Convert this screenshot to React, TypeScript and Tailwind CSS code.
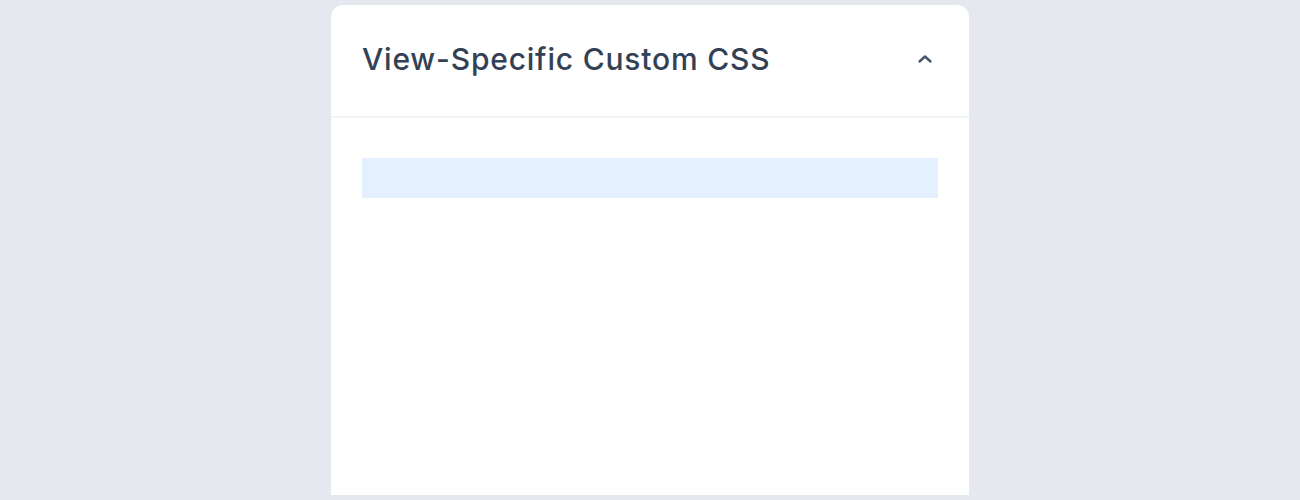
export default function App() {
  return (
    <div
      className="w-screen h-[500px] bg-[#e5e9ef] flex justify-center pt-[5px]"
      style={{ fontFamily: 'Inter, "Noto Sans", sans-serif' }}
    >
      <div className="w-[638px] h-[490px] bg-white rounded-t-xl flex flex-col">
        {/* Header */}
        <div className="h-[113px] flex items-center justify-between pl-[31px] pr-[35px] border-b-2 border-[#f3f4f6]">
          <h2 className="text-[30px] font-medium text-[#334155] tracking-[0.8px] leading-none -mt-[3px]">
            View-Specific Custom CSS
          </h2>
          <svg className="w-[18px] h-[18px] text-[#475569] -mt-[3px]" viewBox="0 0 18 18" fill="none">
            <path d="M3.5 11.5L9 6.5l5.5 5" stroke="currentColor" strokeWidth="2.4" strokeLinecap="round" strokeLinejoin="round" />
          </svg>
        </div>

        {/* Body */}
        <div className="px-[31px] pt-[40px]">
          <div className="h-10 bg-[#e4f0fd]" />
        </div>
      </div>
    </div>
  )
}
